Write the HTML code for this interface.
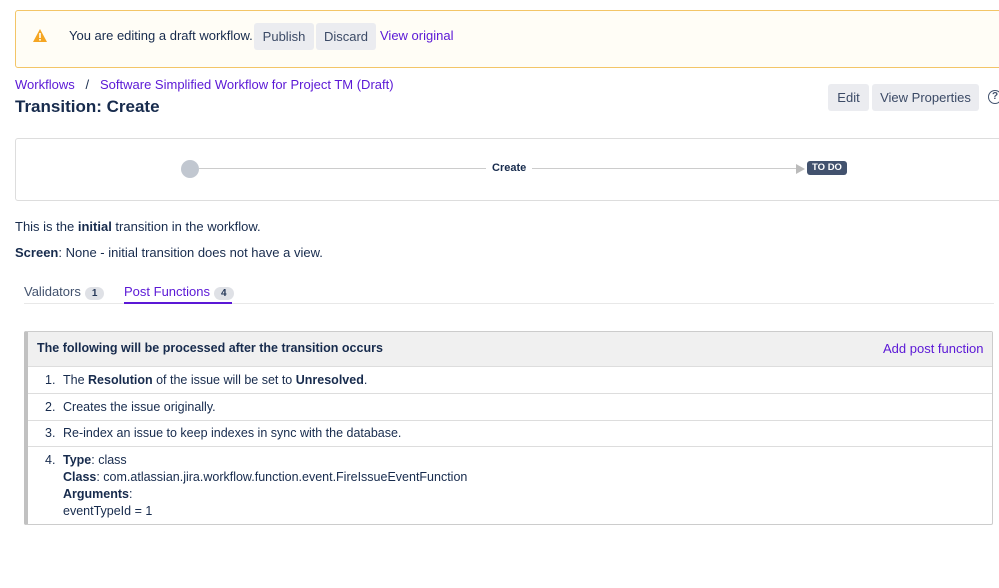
<!DOCTYPE html>
<html><head><style>
body{margin:0;width:999px;height:588px;overflow:hidden;background:#fff;font-family:"Liberation Sans",sans-serif;color:#172b4d;font-size:13px;position:relative}
.a{position:absolute}
.btn{position:absolute;background:#ebecf0;border-radius:3px;height:27px;line-height:27px;text-align:center;font-size:13px;color:#3b4a66}
a{color:#5b18d6;text-decoration:none}
.row{position:absolute;left:28px;width:964px;box-sizing:border-box;border-top:1px solid #ddd;padding-left:35px;font-size:12.5px}
.num{position:absolute;left:17px}
.badge{display:inline-block;background:#dfe1e6;border-radius:9px;font-size:10px;font-weight:bold;padding:1px 7px;margin-left:4px;color:#253858}
</style></head><body>
<div class="a" style="left:15px;top:10px;width:1000px;height:56px;border:1px solid #f3c567;border-radius:3px;background:#fffdf6"></div>
<svg class="a" style="left:33px;top:29px" width="14" height="13" viewBox="0 0 14 13"><path d="M7 0L14 13H0Z" fill="#f5a623"/><rect x="6.2" y="4" width="1.6" height="5" fill="#fff"/><rect x="6.2" y="10" width="1.6" height="1.6" fill="#fff"/></svg>
<div class="a" style="left:69px;top:28px;font-size:13px">You are editing a draft workflow.</div>
<div class="btn" style="left:254px;top:23px;width:60px">Publish</div>
<div class="btn" style="left:316px;top:23px;width:60px">Discard</div>
<div class="a" style="left:380px;top:28px"><a>View original</a></div>
<div class="a" style="left:15px;top:77px;font-size:13px"><a>Workflows</a>&nbsp;&nbsp;&nbsp;/&nbsp;&nbsp;&nbsp;<a>Software Simplified Workflow for Project TM (Draft)</a></div>
<div class="a" style="left:15px;top:97px;font-size:17px;font-weight:bold">Transition: Create</div>
<div class="btn" style="left:828px;top:84px;width:41px">Edit</div>
<div class="btn" style="left:872px;top:84px;width:107px">View Properties</div>
<div class="a" style="left:988px;top:90px;width:12px;height:12px;border:1.5px solid #42526e;border-radius:50%;font-size:10px;line-height:12px;text-align:center;font-weight:bold;color:#42526e">?</div>
<div class="a" style="left:15px;top:138px;width:1000px;height:61px;border:1px solid #ddd;border-radius:3px"></div>
<div class="a" style="left:181px;top:160px;width:18px;height:18px;border-radius:50%;background:#c1c7d0"></div>
<div class="a" style="left:199px;top:168px;width:600px;height:1px;background:#ccc"></div>
<div class="a" style="left:486px;top:162px;background:#fff;padding:0 6px;font-size:11px;font-weight:bold">Create</div>
<div class="a" style="left:796px;top:164px;width:0;height:0;border-left:9px solid #bbb;border-top:5px solid transparent;border-bottom:5px solid transparent"></div>
<div class="a" style="left:807px;top:161px;width:40px;height:14px;background:#42526e;border-radius:3px;color:#fff;font-size:9.5px;font-weight:bold;text-align:center;line-height:14px">TO DO</div>
<div class="a" style="left:15px;top:219px">This is the <b>initial</b> transition in the workflow.</div>
<div class="a" style="left:15px;top:245px"><b>Screen</b>: None - initial transition does not have a view.</div>
<div class="a" style="left:24px;top:284px;color:#42526e">Validators<span class="badge">1</span></div>
<div class="a" style="left:124px;top:284px;color:#5b18d6">Post Functions<span class="badge">4</span></div>
<div class="a" style="left:24px;top:303px;width:970px;height:1px;background:#e8e8e8"></div>
<div class="a" style="left:124px;top:302px;width:108px;height:2px;background:#5b18d6"></div>
<div class="a" style="left:24px;top:331px;width:964px;height:192px;border:1px solid #ccc;border-left:4px solid #c1c1c1;border-radius:2px"></div>
<div class="a" style="left:28px;top:332px;width:964px;height:34px;background:#f0f0f0"></div>
<div class="a" style="left:37px;top:341px;font-weight:bold;font-size:12.5px">The following will be processed after the transition occurs</div>
<div class="a" style="left:883px;top:341px"><a>Add post function</a></div>
<div class="row" style="top:366px;height:26px;line-height:26px"><span class="num">1.</span>The <b>Resolution</b> of the issue will be set to <b>Unresolved</b>.</div>
<div class="row" style="top:393px;height:26px;line-height:26px"><span class="num">2.</span>Creates the issue originally.</div>
<div class="row" style="top:420px;height:25px;line-height:25px"><span class="num">3.</span>Re-index an issue to keep indexes in sync with the database.</div>
<div class="row" style="top:446px;height:77px;line-height:17px;padding-top:5px"><span class="num">4.</span><b>Type</b>: class<br><b>Class</b>: com.atlassian.jira.workflow.function.event.FireIssueEventFunction<br><b>Arguments</b>:<br>eventTypeId = 1</div>
</body></html>
